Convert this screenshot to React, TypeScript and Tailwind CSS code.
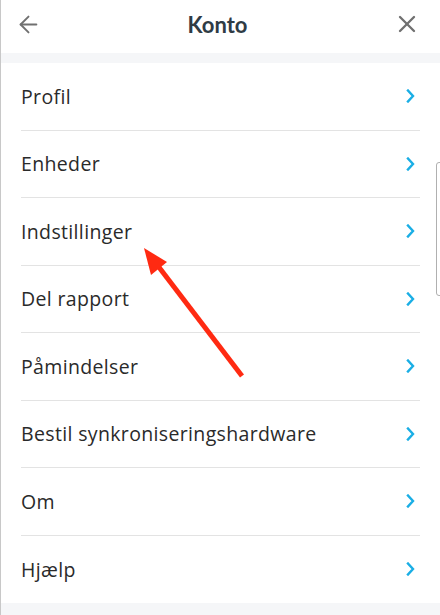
import { ArrowLeft, X } from 'lucide-react';

const items = [
  'Profil',
  'Enheder',
  'Indstillinger',
  'Del rapport',
  'Påmindelser',
  'Bestil synkroniseringshardware',
  'Om',
  'Hjælp',
];

function Chevron() {
  return (
    <svg width="9" height="14" viewBox="0 0 9 14" fill="none" className="shrink-0">
      <path d="M2 1.5 L7 7 L2 12.5" stroke="#1aaee5" strokeWidth="2.4" strokeLinecap="square" />
    </svg>
  );
}

export default function App() {
  return (
    <div className="relative flex h-[615px] w-[440px] flex-col overflow-hidden border-l border-[#c8c8c8] bg-[#f5f6f8] font-['Open_Sans',sans-serif] [font-variant-ligatures:none]">
      <header className="flex h-[53px] shrink-0 items-center justify-between bg-white pb-[5px] pl-[14px] pr-[19px]">
        <ArrowLeft className="h-[27px] w-[27px] text-[#707070]" strokeWidth={1.7} />
        <h1 className="font-['Lato',sans-serif] text-[22px] font-bold text-[#2f3b45]">Konto</h1>
        <X className="h-[28px] w-[28px] text-[#707070]" strokeWidth={2} />
      </header>
      <div className="h-[10px] shrink-0" />
      <ul className="bg-white px-[20px]">
        {items.map((label, i) => (
          <li
            key={label}
            className={`flex h-[67.5px] items-center justify-between pr-[5px] ${i < items.length - 1 ? 'border-b border-[#e3e3e3]' : ''}`}
          >
            <span className="text-[19.5px] tracking-[0.35px] text-[#2a2a2a]">{label}</span>
            <Chevron />
          </li>
        ))}
      </ul>
      <svg className="pointer-events-none absolute left-0 top-0" width="440" height="615">
        <line x1="241" y1="376" x2="154" y2="262" stroke="#ff2a12" strokeWidth="5" />
        <polygon points="143,248 166,262 150,275" fill="#ff2a12" />
      </svg>
      <div className="absolute right-[-4px] top-[162px] h-[134px] w-[8px] rounded-[3px] border border-[#b0b0b0] bg-white" />
    </div>
  );
}
